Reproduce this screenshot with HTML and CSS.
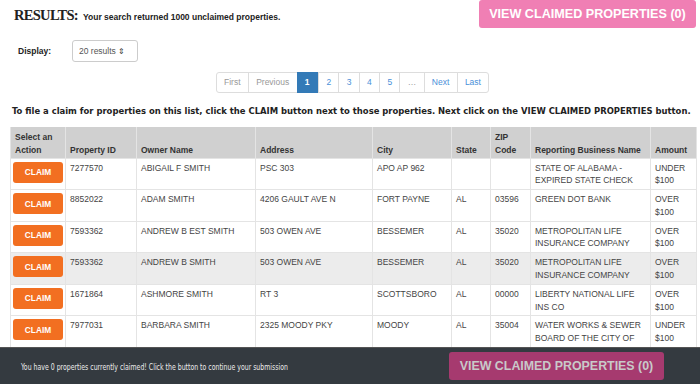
FILE: index.html
```html
<!DOCTYPE html>
<html>
    <head>
        <meta charset="UTF-8">
        <title>Results</title>
        <link rel="stylesheet" href="styles.css">
    </head>
    <body>
        <div class="results">

            <div class="top">
                <h2 class="title">RESULTS:<span class="count">Your search returned 1000 unclaimed properties.</span></h2>
                <button class="viewBtn">VIEW CLAIMED PROPERTIES (0)</button>
            </div>

            <div class="display">
                <label for="perPage">Display:</label>
                <div class="select" id="perPage">20 results <span class="caret">&#8661;</span></div>
            </div>

            <ul class="pager">
                <li class="off">First</li>
                <li class="off">Previous</li>
                <li class="active">1</li>
                <li>2</li>
                <li>3</li>
                <li>4</li>
                <li>5</li>
                <li class="off">&hellip;</li>
                <li>Next</li>
                <li>Last</li>
            </ul>

            <p class="help">To file a claim for properties on this list, click the CLAIM button next to those properties. Next click on the VIEW CLAIMED PROPERTIES button.</p>

            <table class="list">
                <thead>
                    <tr>
                        <th class="c1">Select an Action</th>
                        <th class="c2">Property ID</th>
                        <th class="c3">Owner Name</th>
                        <th class="c4">Address</th>
                        <th class="c5">City</th>
                        <th class="c6">State</th>
                        <th class="c7">ZIP Code</th>
                        <th class="c8">Reporting Business Name</th>
                        <th class="c9">Amount</th>
                    </tr>
                </thead>
                <tbody>
                    <tr>
                        <td><button class="claim">CLAIM</button></td>
                        <td>7277570</td>
                        <td>ABIGAIL F SMITH</td>
                        <td>PSC 303</td>
                        <td>APO AP 962</td>
                        <td></td>
                        <td></td>
                        <td>STATE OF ALABAMA - EXPIRED STATE CHECK</td>
                        <td>UNDER $100</td>
                    </tr>
                    <tr>
                        <td><button class="claim">CLAIM</button></td>
                        <td>8852022</td>
                        <td>ADAM SMITH</td>
                        <td>4206 GAULT AVE N</td>
                        <td>FORT PAYNE</td>
                        <td>AL</td>
                        <td>03596</td>
                        <td>GREEN DOT BANK</td>
                        <td>OVER $100</td>
                    </tr>
                    <tr>
                        <td><button class="claim">CLAIM</button></td>
                        <td>7593362</td>
                        <td>ANDREW B EST SMITH</td>
                        <td>503 OWEN AVE</td>
                        <td>BESSEMER</td>
                        <td>AL</td>
                        <td>35020</td>
                        <td>METROPOLITAN LIFE INSURANCE COMPANY</td>
                        <td>OVER $100</td>
                    </tr>
                    <tr class="grey">
                        <td><button class="claim">CLAIM</button></td>
                        <td>7593362</td>
                        <td>ANDREW B SMITH</td>
                        <td>503 OWEN AVE</td>
                        <td>BESSEMER</td>
                        <td>AL</td>
                        <td>35020</td>
                        <td>METROPOLITAN LIFE INSURANCE COMPANY</td>
                        <td>OVER $100</td>
                    </tr>
                    <tr>
                        <td><button class="claim">CLAIM</button></td>
                        <td>1671864</td>
                        <td>ASHMORE SMITH</td>
                        <td>RT 3</td>
                        <td>SCOTTSBORO</td>
                        <td>AL</td>
                        <td>00000</td>
                        <td>LIBERTY NATIONAL LIFE INS CO</td>
                        <td>OVER $100</td>
                    </tr>
                    <tr>
                        <td><button class="claim">CLAIM</button></td>
                        <td>7977031</td>
                        <td>BARBARA SMITH</td>
                        <td>2325 MOODY PKY</td>
                        <td>MOODY</td>
                        <td>AL</td>
                        <td>35004</td>
                        <td>WATER WORKS &amp; SEWER BOARD OF THE CITY OF</td>
                        <td>UNDER $100</td>
                    </tr>
                    <tr>
                        <td><button class="claim">CLAIM</button></td>
                        <td>7977032</td>
                        <td>BARBARA SMITH</td>
                        <td>2325 MOODY PKY</td>
                        <td>MOODY</td>
                        <td>AL</td>
                        <td>35004</td>
                        <td>WATER WORKS &amp; SEWER BOARD</td>
                        <td>UNDER $100</td>
                    </tr>
                </tbody>
            </table>

        </div>

        <div class="footBar">
            <div class="footLeft">
                <span class="footText">You have 0 properties currently claimed! Click the button to continue your submission</span>
            </div>
            <button class="footBtn">VIEW CLAIMED PROPERTIES (0)</button>
        </div>
    </body>
</html>
```

FILE: styles.css
```css
body{
    margin: 0;
    font-family: "Liberation Sans", Arial, sans-serif;
    font-size: 9px;
    color: #333;
    background: #fff;
}
.results{
    padding: 0 4px 0 10px;
}
.top{
    display: flex;
    justify-content: space-between;
    align-items: flex-start;
    height: 40px;
}
.title{
    margin: 7px 0 0 4px;
    font-family: "Liberation Serif", "Times New Roman", serif;
    font-size: 14.5px;
    letter-spacing: -0.7px;
    font-weight: bold;
    color: #222;
}
.count{
    margin-left: 5px;
    letter-spacing: 0;
    font-family: "Liberation Sans", Arial, sans-serif;
    font-size: 8.5px;
    color: #222;
}
.viewBtn{
    width: 217px;
    height: 28px;
    margin: 0;
    border: 0;
    border-radius: 3px;
    background: #f07fb4;
    color: #fff;
    font-family: "Liberation Sans", Arial, sans-serif;
    font-weight: bold;
    font-size: 12.6px;
    padding: 0;
}
.display{
    display: flex;
    align-items: center;
    height: 22px;
    margin-left: 8px;
}
.display label{
    width: 54px;
    font-weight: bold;
    font-size: 8.5px;
    color: #222;
}
.select{
    width: 52px;
    height: 20px;
    padding: 0 6px;
    border: 1px solid #ccc;
    border-radius: 3px;
    line-height: 20px;
    color: #555;
    font-size: 8.5px;
}
.caret{
    font-size: 8px;
    color: #333;
}
.pager{
    display: flex;
    justify-content: center;
    margin: 10px 0 0;
    padding: 0;
    list-style: none;
}
.pager li{
    height: 19px;
    padding: 0 7.3px;
    border: 1px solid #ddd;
    margin-left: -1px;
    line-height: 19px;
    color: #4a90d9;
    font-size: 8.5px;
    background: #fff;
}
.pager li:first-child{
    border-radius: 3px 0 0 3px;
}
.pager li:last-child{
    border-radius: 0 3px 3px 0;
}
.pager li.off{
    color: #999;
}
.pager li.active{
    background: #337ab7;
    border-color: #337ab7;
    color: #fff;
    font-weight: bold;
    width: 6px;
}
.help{
    margin: 12px 0 0 2px;
    height: 22px;
    font-family: "Liberation Sans Narrow", "DejaVu Sans Condensed", "Liberation Sans", sans-serif;
    font-weight: bold;
    font-size: 9.4px;
    color: #222;
    white-space: nowrap;
}
.list{
    width: 686px;
    border-collapse: collapse;
    table-layout: fixed;
    font-size: 8.5px;
}
.list th,
.list td{
    box-sizing: border-box;
}
.list th{
    height: 31px;
    padding: 0 3px 1px 4px;
    background: #d0d0d0;
    border: 1px solid #e4e4e4;
    border-top: 0;
    text-align: left;
    vertical-align: bottom;
    line-height: 13px;
    color: #333;
    font-size: 8.5px;
}
.list td{
    padding: 3px 4px 2px;
    border: 1px solid #e4e4e4;
    vertical-align: top;
    line-height: 12.8px;
    color: #444;
}
.list td:first-child{
    padding: 3px 2px 2px 2px;
}
.list tr.grey td{
    background: #ececec;
}
.c1{ width: 55px; }
.c2{ width: 71px; }
.c3{ width: 119px; }
.c4{ width: 117px; }
.c5{ width: 79px; }
.c6{ width: 39px; }
.c7{ width: 40px; }
.c8{ width: 120px; }
.c9{ width: 46px; }
.claim{
    display: block;
    width: 50px;
    height: 21px;
    border: 0;
    border-radius: 3px;
    background: #f26f21;
    color: #fff;
    font-family: "Liberation Sans", Arial, sans-serif;
    font-weight: bold;
    font-size: 8.3px;
    padding: 0;
}
.footBar{
    position: fixed;
    left: 0;
    right: 0;
    bottom: 0;
    height: 36px;
    background: #343a40;
    display: flex;
    align-items: center;
    border-top: 1px solid #555;
}
.footLeft{
    width: 428px;
    margin-left: 21px;
}
.footText{
    display: inline-block;
    white-space: nowrap;
    color: #ececec;
    font-family: "DejaVu Sans Condensed", "Liberation Sans", sans-serif;
    font-size: 9.2px;
    transform: scaleX(0.75);
    transform-origin: left center;
}
.footBtn{
    width: 215px;
    height: 28px;
    border: 0;
    border-radius: 3px;
    background: #a63a6f;
    color: #c9c9c9;
    font-family: "Liberation Sans", Arial, sans-serif;
    font-weight: bold;
    font-size: 12.4px;
    padding: 0;
}
```
